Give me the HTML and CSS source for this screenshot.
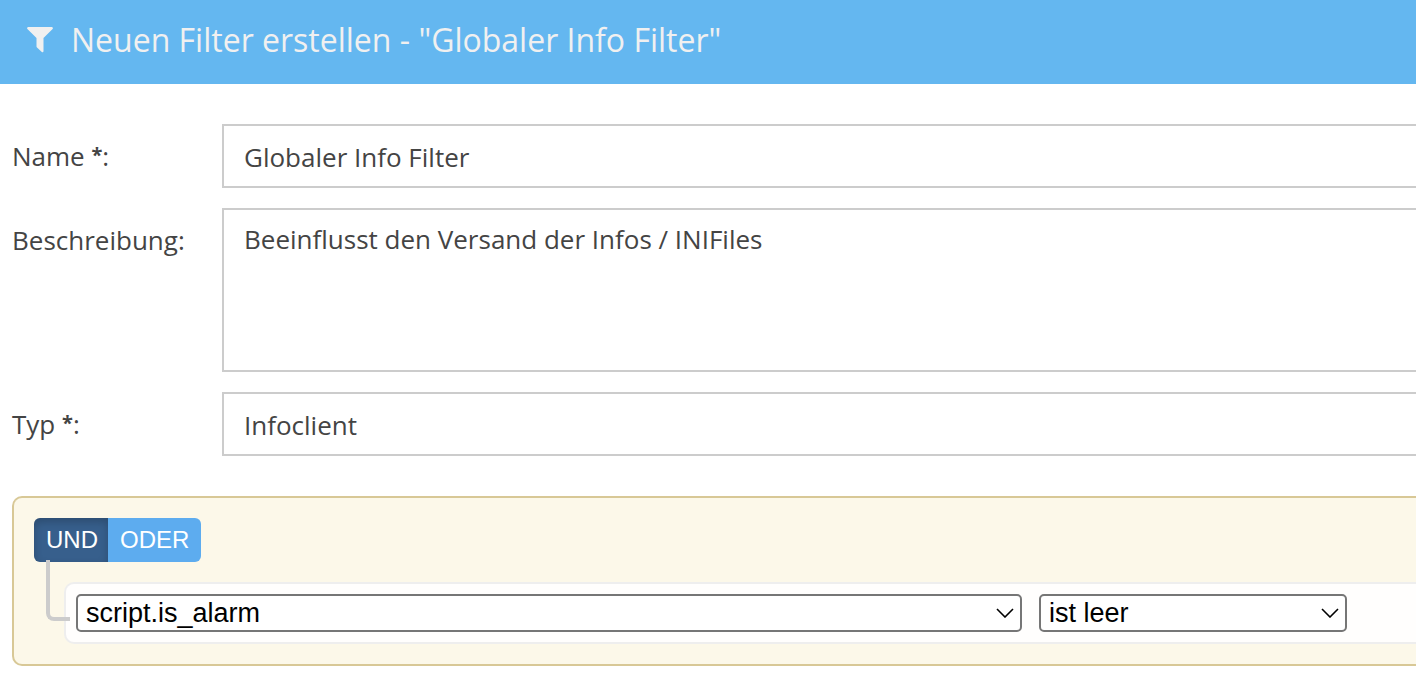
FILE: index.html
```html
<!DOCTYPE html>
<html lang="de">
<head>
<meta charset="utf-8">
<meta name="viewport" content="width=device-width, initial-scale=1">
<title>Neuen Filter erstellen</title>
<link rel="stylesheet" href="styles.css">
</head>
<body>
<header class="header">
  <svg class="header-icon" viewBox="0 0 26 26" aria-hidden="true"><path d="M1.2 0H24.8Q26.6 .4 25.6 2L16.5 11V24.2Q16.3 25.7 14.8 25L10 20.6Q9.5 20 9.5 19.4V11L.4 2Q-.6 .4 1.2 0Z"/></svg>
  <h1 class="title">Neuen Filter erstellen - "Globaler Info Filter"</h1>
</header>
<form class="form">
  <div class="fields">
    <label class="label" for="name">Name <b class="required">*</b>:</label>
    <input class="control" id="name" type="text" value="Globaler Info Filter">
    <label class="label" for="description">Beschreibung:</label>
    <textarea class="control control-area" id="description">Beeinflusst den Versand der Infos / INIFiles</textarea>
    <label class="label" for="type">Typ <b class="required">*</b>:</label>
    <input class="control" id="type" type="text" value="Infoclient">
  </div>
  <section class="group">
    <div class="conditions">
      <button class="condition condition-active" type="button">UND</button>
      <button class="condition" type="button">ODER</button>
    </div>
    <div class="rule">
      <div class="picker picker-field">
        <select class="select" aria-label="Feld"><option>script.is_alarm</option></select>
        <svg class="chevron" viewBox="0 0 18 10" aria-hidden="true"><path d="M1 1l8 8 8-8"/></svg>
      </div>
      <div class="picker picker-operator">
        <select class="select" aria-label="Operator"><option>ist leer</option></select>
        <svg class="chevron" viewBox="0 0 18 10" aria-hidden="true"><path d="M1 1l8 8 8-8"/></svg>
      </div>
    </div>
  </section>
</form>
</body>
</html>
```
FILE: styles.css
```css
*,
*::before {
  box-sizing: border-box;
}

body {
  margin: 0;
  background: #fff;
  color: #444;
  font-family: "Open Sans", sans-serif;
  font-size: 26px;
}

.header {
  display: flex;
  align-items: center;
  gap: 18px;
  padding: 18px 27px 22px;
  background: #64b7f0;
  color: #f0f0f0;
}

.header-icon {
  width: 26px;
  height: 26px;
  fill: currentColor;
}

.title {
  margin: 0;
  font-size: 32px;
  font-weight: 400;
  line-height: 44px;
}

.form {
  padding: 40px 0 24px 12px;
}

.fields {
  display: grid;
  grid-template-columns: 190px 1fr;
  gap: 20px;
}

.label {
  padding-top: 14px;
  line-height: 36px;
}

.required {
  font-size: 20px;
  line-height: 1;
  vertical-align: 4px;
}

.control {
  width: 100%;
  height: 64px;
  margin: 0;
  padding: 2px 20px 0;
  border: 2px solid #ccc;
  border-right: 0;
  border-radius: 0;
  background: #fff;
  color: inherit;
  font: inherit;
  line-height: 36px;
}

.control-area {
  display: block;
  height: 164px;
  padding-top: 11px;
  resize: none;
}

.group {
  margin-top: 40px;
  padding: 20px 0 20px 20px;
  border: 2px solid #d8c896;
  border-right: 0;
  border-radius: 10px 0 0 10px;
  background: #fcf8e9;
  font-family: "Liberation Sans", Arial, sans-serif;
}

.conditions {
  display: flex;
}

.condition {
  height: 44px;
  padding: 0 12px;
  border: 0;
  border-radius: 0 6px 6px 0;
  background: #5dacef;
  color: #fff;
  font: inherit;
  font-size: 24px;
}

.condition-active {
  padding-right: 10px;
  border-radius: 6px 0 0 6px;
  background: #375f8c;
  box-shadow: inset 0 4px 8px rgba(0, 0, 0, 0.2);
}

.rule {
  position: relative;
  display: flex;
  gap: 17px;
  margin: 20px 0 0 30px;
  padding: 10px 69px 10px 10px;
  border: 2px solid #eee;
  border-right: 0;
  border-radius: 10px 0 0 10px;
  background: #fffefd;
}

.rule::before {
  content: "";
  position: absolute;
  left: -20px;
  top: -24px;
  width: 24px;
  height: 61px;
  border: solid #ccc;
  border-width: 0 0 4px 4px;
  border-radius: 0 0 0 8px;
}

.picker {
  display: grid;
  align-items: center;
}

.picker-field {
  flex: 1;
}

.picker-operator {
  flex: 0 0 308px;
}

.select {
  grid-area: 1 / 1;
  width: 100%;
  height: 38px;
  margin: 0;
  padding: 0 36px 0 8px;
  border: 2px solid #767676;
  border-radius: 5px;
  appearance: none;
  background: #fff;
  color: #000;
  font: inherit;
  font-size: 27px;
}

.chevron {
  grid-area: 1 / 1;
  justify-self: end;
  width: 18px;
  height: 10px;
  margin-right: 8px;
  fill: none;
  stroke: #000;
  stroke-width: 1.6;
  pointer-events: none;
}
```
